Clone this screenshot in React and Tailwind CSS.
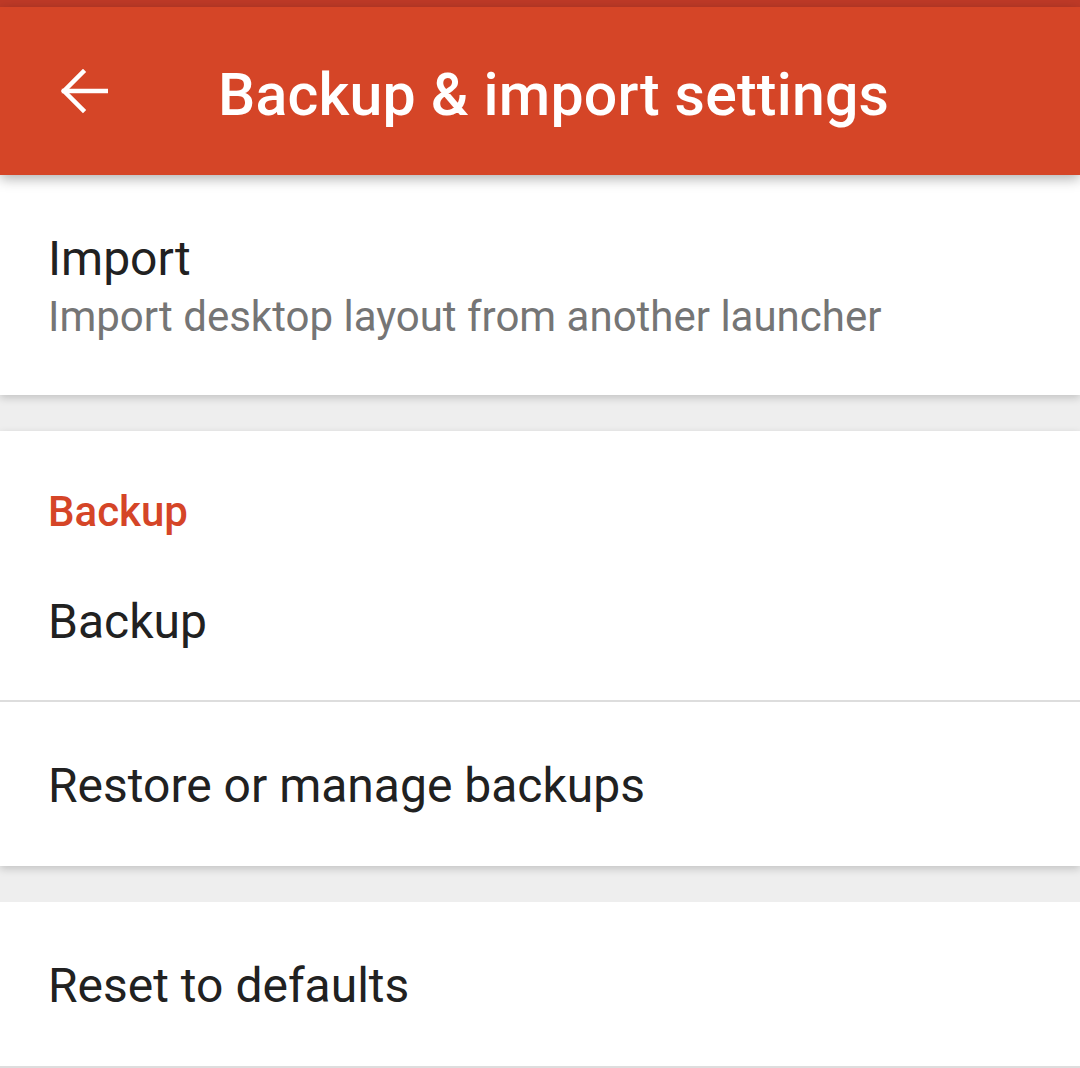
import React from 'react';

const Row = ({ title, subtitle, divider = false, className = '' }) => (
  <div className={`flex flex-col justify-center px-[48px] ${divider ? 'border-b-2 border-[#dddddd]' : ''} ${className}`}>
    <span className="text-[48px] leading-[60px] text-[#212121]">{title}</span>
    {subtitle && <span className="text-[42px] leading-[56px] text-[#757575]">{subtitle}</span>}
  </div>
);

export default function App() {
  return (
    <div className="w-[1080px] h-[1068px] bg-[#eeeeee] overflow-hidden font-['Roboto',sans-serif]">
      <div className="h-[7px] bg-[#bf3a27]" />
      <header className="relative z-20 h-[168px] bg-[#d54527] flex items-center shadow-[0_4px_12px_rgba(0,0,0,0.3)]">
        <div className="w-[218px] pl-[60px] flex items-center">
          <svg width="48" height="48" viewBox="0 0 48 48" fill="none" stroke="white" strokeWidth="4.5" strokeLinecap="square">
            <path d="M46 24H4" />
            <path d="M23 5L4 24l19 19" />
          </svg>
        </div>
        <h1 className="text-white text-[59px] leading-[70px] font-medium tracking-[0.2px] pt-[8px]">Backup &amp; import settings</h1>
      </header>

      <section className="relative z-10 bg-white h-[220px] shadow-[0_3px_8px_rgba(0,0,0,0.18)] flex flex-col justify-center pt-[4px]">
        <Row title="Import" subtitle="Import desktop layout from another launcher" />
      </section>

      <section className="relative z-10 mt-[36px] bg-white shadow-[0_3px_8px_rgba(0,0,0,0.18)]">
        <div className="h-[135px] flex items-end px-[48px] pb-[29px]">
          <span className="text-[42px] leading-[50px] font-medium text-[#d54527]">Backup</span>
        </div>
        <Row title="Backup" divider className="h-[136px] pb-[22px]" />
        <Row title="Restore or manage backups" className="h-[164px] pt-[4px]" />
      </section>

      <section className="relative z-10 mt-[36px] bg-white">
        <Row title="Reset to defaults" divider className="h-[166px] pt-[4px]" />
      </section>
    </div>
  );
}
